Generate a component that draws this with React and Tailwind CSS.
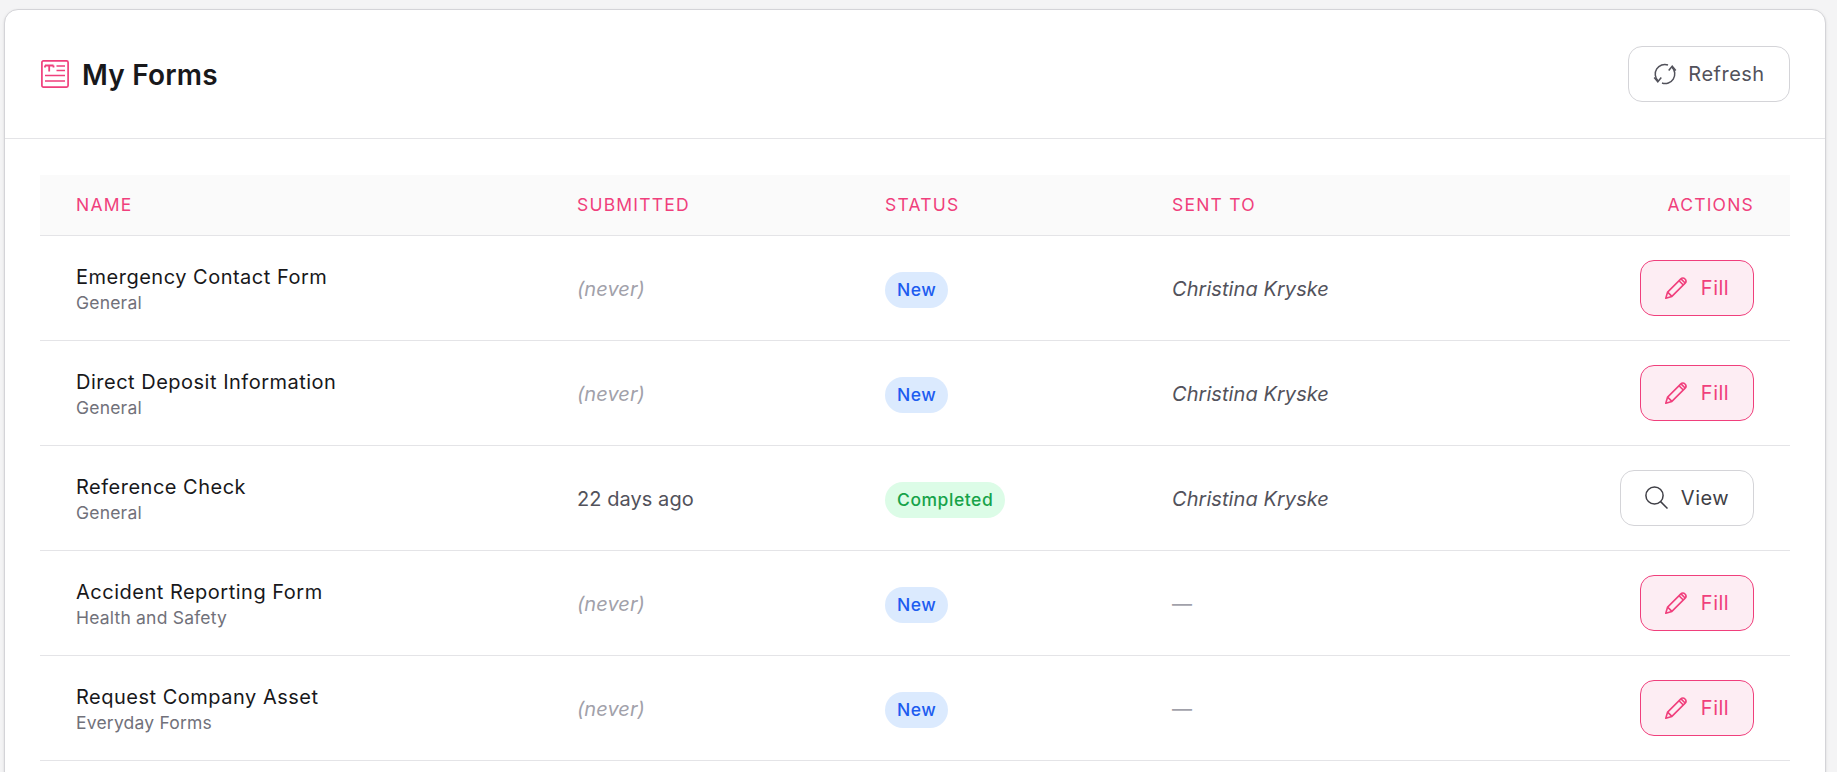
import React from "react";

const rows = [
  { name: "Emergency Contact Form", cat: "General", sub: null, status: "New", to: "Christina Kryske" },
  { name: "Direct Deposit Information", cat: "General", sub: null, status: "New", to: "Christina Kryske" },
  { name: "Reference Check", cat: "General", sub: "22 days ago", status: "Completed", to: "Christina Kryske" },
  { name: "Accident Reporting Form", cat: "Health and Safety", sub: null, status: "New", to: null },
  { name: "Request Company Asset", cat: "Everyday Forms", sub: null, status: "New", to: null },
];

function ArticleIcon() {
  return (
    <svg width="28" height="28" viewBox="0 0 28 28" fill="none" stroke="#f03f7c" strokeWidth="1.7" className="shrink-0">
      <rect x="0.9" y="0.9" width="26.2" height="26.2" rx="1.5" />
      <path d="M4 5.5H12.5M8.2 5.5V11.5M4 5.5V7.5M12.5 5.5V7.5" strokeWidth="1.8" />
      <path d="M15.5 6H24M15.5 10.5H24M4 15.5H24M4 21H24" />
    </svg>
  );
}

function RefreshIcon() {
  return (
    <svg width="24" height="24" viewBox="0 0 24 24" fill="none" stroke="#52525b" strokeWidth="1.5" className="shrink-0">
      <path d="M15 3A9.6 9.6 0 0 0 5 18.8" />
      <path d="M1.2 15.6L4.8 19.8L8.3 15.6" />
      <path d="M9 21A9.6 9.6 0 0 0 19 5.2" />
      <path d="M22.8 8.4L19.2 4.2L15.7 8.4" />
    </svg>
  );
}

function PencilIcon() {
  return (
    <svg width="22" height="22" viewBox="0 0 22 22" fill="none" stroke="#f03f7c" strokeWidth="1.6" strokeLinejoin="round" className="shrink-0">
      <path d="M0.8 21.2L2.6 15.1L15.6 2.1C17 0.7 18.7 0.7 20 2C21.3 3.3 21.3 5 19.9 6.4L6.9 19.4Z" />
      <path d="M2.6 15.1L6.9 19.4M14 3.7L18.3 8M16 1.9L20.1 6" />
    </svg>
  );
}

function SearchIcon() {
  return (
    <svg width="23" height="23" viewBox="0 0 23 23" fill="none" stroke="#3f3f46" strokeWidth="1.5" className="shrink-0">
      <circle cx="9.5" cy="9.5" r="8.6" />
      <path d="M15.6 15.6L22.5 22.5" />
    </svg>
  );
}

function Th({ children, right }) {
  return (
    <th className={`h-[60px] p-0 text-[17.5px] font-normal uppercase tracking-[1.2px] text-[#f03f7c] border-b border-[#e4e4e7] ${right ? "text-right pr-9" : "text-left pl-9"}`}>
      {children}
    </th>
  );
}

function Row({ r }) {
  return (
    <tr className="h-[105px] border-b border-[#e4e4e7]">
      <td className="p-0 pl-9 pt-[4px] align-middle">
        <div className="text-[20px] leading-[26px] tracking-[0.5px] text-[#18181b]">{r.name}</div>
        <div className="text-[17.5px] leading-[26px] tracking-[0.2px] text-[#71717a]">{r.cat}</div>
      </td>
      <td className="p-0 pl-9 pt-[2px] align-middle text-[20px] tracking-[0.06px]">
        {r.sub ? <span className="text-[#52525b]">{r.sub}</span> : <span className="italic text-[#a1a1aa]">(never)</span>}
      </td>
      <td className="p-0 pl-9 pt-[4px] align-middle">
        {r.status === "New" ? (
          <span className="flex h-9 w-fit items-center rounded-full bg-[#dbeafe] px-3 pt-px text-[17.5px] font-[450] tracking-[0.55px] text-[#1d5cf0]">New</span>
        ) : (
          <span className="flex h-9 w-fit items-center rounded-full bg-[#dcfce7] px-3 pt-px text-[17.5px] font-[450] tracking-[0.55px] text-[#16a34a]">Completed</span>
        )}
      </td>
      <td className="p-0 pl-9 pt-[2px] align-middle text-[20px] tracking-[0.06px]">
        {r.to ? <span className="italic text-[#52525b]">{r.to}</span> : <span className="text-[#a1a1aa]">—</span>}
      </td>
      <td className="p-0 pr-9 align-middle">
        {r.status === "New" ? (
          <button className="ml-auto flex h-14 w-[114px] items-center justify-center gap-[14px] rounded-[14px] border border-[#f03f7c] bg-[#fdedf3] text-[20px] tracking-[0.5px] text-[#f03f7c]">
            <PencilIcon />
            Fill
          </button>
        ) : (
          <button className="ml-auto flex h-14 w-[134px] items-center justify-center gap-[13px] rounded-[14px] border border-[#d4d4d8] bg-white text-[20px] tracking-[0.5px] text-[#3f3f46]">
            <SearchIcon />
            View
          </button>
        )}
      </td>
    </tr>
  );
}

export default function App() {
  return (
    <div className="h-screen overflow-hidden bg-[#f4f4f5] pl-1 pr-[11px] pt-[9px] font-['Inter',sans-serif]">
      <div className="h-[800px] rounded-[14px] border border-[#d4d4d8] bg-white shadow-sm">
        <header className="flex h-[129px] items-center justify-between border-b border-[#e4e4e7] pl-9 pr-[35px]">
          <div className="flex items-center gap-[13px]">
            <ArticleIcon />
            <h1 className="pt-[2px] text-[28px] font-semibold tracking-[0.2px] text-[#18181b]">My Forms</h1>
          </div>
          <button className="flex h-14 w-[162px] items-center justify-center gap-[11px] rounded-[14px] border border-[#d4d4d8] bg-white text-[20px] tracking-[0.5px] text-[#52525b]">
            <RefreshIcon />
            Refresh
          </button>
        </header>
        <div className="pl-[35px] pr-[35px] pt-9">
          <table className="w-full table-fixed border-collapse">
            <colgroup>
              <col className="w-[501px]" />
              <col className="w-[308px]" />
              <col className="w-[287px]" />
              <col />
              <col className="w-[300px]" />
            </colgroup>
            <thead className="bg-[#fafafa]">
              <tr>
                <Th>Name</Th>
                <Th>Submitted</Th>
                <Th>Status</Th>
                <Th>Sent to</Th>
                <Th right>Actions</Th>
              </tr>
            </thead>
            <tbody>
              {rows.map((r) => (
                <Row key={r.name} r={r} />
              ))}
            </tbody>
          </table>
        </div>
      </div>
    </div>
  );
}
